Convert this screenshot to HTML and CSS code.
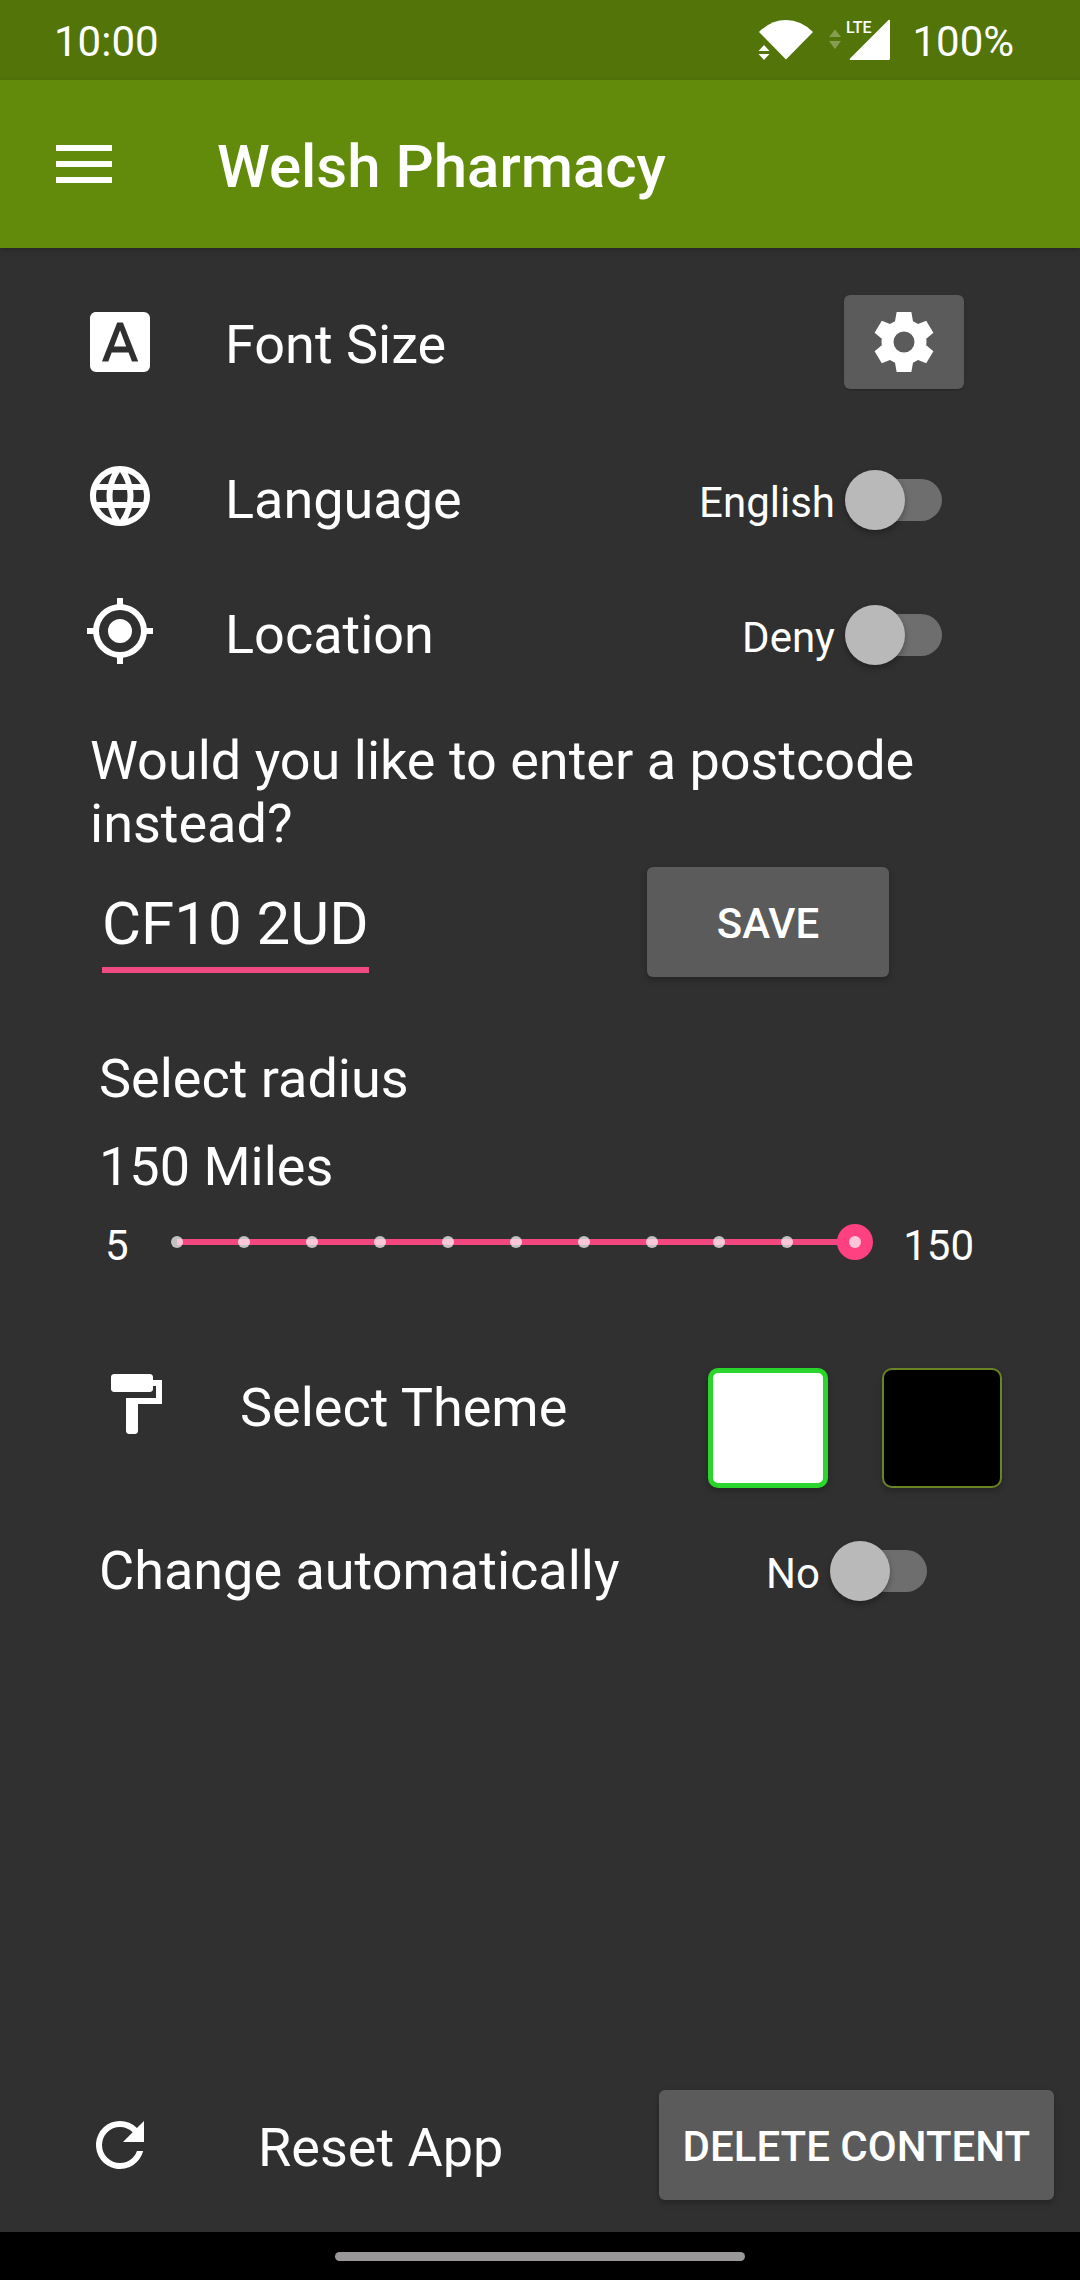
FILE: index.html
```html
<!DOCTYPE html>
<html lang="en">
<head>
<meta charset="utf-8">
<meta name="viewport" content="width=device-width, initial-scale=1">
<title>Welsh Pharmacy</title>
<link rel="stylesheet" href="styles.css">
</head>
<body>
<div class="status-bar">
  <span class="status-text">10:00</span>
  <div class="status-icons">
    <svg width="56" height="42" viewBox="0 0 56 42" fill="#fff" aria-hidden="true">
      <path d="M28 40.500L1 13Q13 1 28 1T55 13z"/>
      <path d="M6 26l5.500 6H.5zM.5 35h11L6 41z"/>
    </svg>
    <svg width="62" height="54" viewBox="0 -6 62 54" fill="#fff" aria-hidden="true">
      <path opacity=".3" d="M7 10.500l6 7.500H1zM1 22h12l-6 8z"/>
      <path d="M60.500 1q1.500-1 1.500 1v37.500q0 1.500-1.500 1.500H23q-2 0-1-1.500z"/>
      <text class="lte" x="18" y="14">LTE</text>
    </svg>
    <span class="status-text">100%</span>
  </div>
</div>

<header class="app-bar">
  <button class="menu-button" type="button" aria-label="Open menu">
    <svg width="56" height="38" viewBox="0 0 56 38" fill="#fff" aria-hidden="true"><path d="M0 0h56v6H0zM0 16h56v6H0zM0 32h56v6H0z"/></svg>
  </button>
  <h1 class="app-title">Welsh Pharmacy</h1>
</header>

<main class="settings">
  <div class="row row-font">
    <svg class="icon" viewBox="0 0 24 24" aria-hidden="true"><path fill-rule="evenodd" d="M4 2h16a2 2 0 0 1 2 2v16a2 2 0 0 1-2 2H4a2 2 0 0 1-2-2V4c0-1.100.9-2 2-2zM11.070 5.500L6 18.500h2.100l1.120-3h5.640l1.120 3h2.090l-5.110-13zM10 13.500l2.030-5.410 2.030 5.410z"/></svg>
    <span class="row-label">Font Size</span>
    <button class="button gear-button" type="button" aria-label="Font size settings">
      <svg class="icon" viewBox="0 0 24 24" aria-hidden="true"><path fill-rule="evenodd" d="M9.550 2h4.900L15 5.100l1.700.9 2.700-1.100 2.400 4-2.400 2q.2 1.100 0 2.200l2.400 2-2.400 4-2.700-1.100-1.700.9-.55 3.100h-4.900L9 18.900 7.300 18l-2.700 1.100-2.400-4 2.400-2q-.2-1.100 0-2.200l-2.400-2 2.400-4L7.300 6 9 5.100zM12 8.500a3.500 3.500 0 1 0 0 7 3.500 3.500 0 0 0 0-7z"/></svg>
    </button>
  </div>

  <div class="row row-switch">
    <svg class="icon" viewBox="0 0 24 24" aria-hidden="true"><path d="M11.990 2C6.470 2 2 6.480 2 12s4.470 10 9.990 10C17.520 22 22 17.520 22 12S17.520 2 11.990 2zm6.930 6h-2.950a15.650 15.650 0 0 0-1.380-3.560A8.030 8.030 0 0 1 18.920 8zM12 4.040c.83 1.200 1.480 2.530 1.910 3.960h-3.820c.43-1.430 1.080-2.760 1.910-3.960zM4.260 14C4.100 13.360 4 12.690 4 12s.1-1.360.26-2h3.380c-.08.660-.14 1.320-.14 2s.06 1.340.14 2H4.260zm.82 2h2.950c.32 1.250.78 2.450 1.380 3.560A7.987 7.987 0 0 1 5.080 16zm2.950-8H5.080a7.987 7.987 0 0 1 4.330-3.560A15.650 15.650 0 0 0 8.030 8zM12 19.960c-.83-1.200-1.480-2.530-1.910-3.960h3.820c-.43 1.430-1.080 2.760-1.910 3.960zM14.340 14H9.660c-.09-.66-.16-1.320-.16-2s.07-1.350.16-2h4.680c.09.650.16 1.320.16 2s-.07 1.340-.16 2zm.25 5.560c.6-1.110 1.060-2.310 1.380-3.560h2.950a8.030 8.030 0 0 1-4.330 3.560zM16.360 14c.08-.66.14-1.320.14-2s-.06-1.340-.14-2h3.380c.16.640.26 1.310.26 2s-.1 1.360-.26 2h-3.380z"/></svg>
    <span class="row-label">Language</span>
    <label class="switch"><span class="switch-text">English</span><input type="checkbox" role="switch"></label>
  </div>

  <div class="row row-switch">
    <svg class="icon" viewBox="0 0 24 24" aria-hidden="true"><path d="M12 8a4 4 0 1 0 0 8 4 4 0 0 0 0-8zm8.940 3A8.994 8.994 0 0 0 13 3.060V1h-2v2.060A8.994 8.994 0 0 0 3.060 11H1v2h2.060A8.994 8.994 0 0 0 11 20.940V23h2v-2.060A8.994 8.994 0 0 0 20.940 13H23v-2h-2.060zM12 19a7 7 0 1 1 0-14 7 7 0 0 1 0 14z"/></svg>
    <span class="row-label">Location</span>
    <label class="switch"><span class="switch-text">Deny</span><input type="checkbox" role="switch"></label>
  </div>

  <label class="question" for="postcode">Would you like to enter a postcode instead?</label>
  <form class="postcode">
    <input class="postcode-input" id="postcode" type="text" value="CF10 2UD">
    <button class="button save-button" type="button">SAVE</button>
  </form>

  <section class="radius">
    <label class="radius-title" for="radius">Select radius</label>
    <output class="radius-value" for="radius">150 Miles</output>
    <div class="range">
      <span class="range-end">5</span>
      <div class="slider">
        <input id="radius" type="range" min="5" max="150" step="14.5" value="150">
        <div class="ticks" aria-hidden="true"><i></i><i></i><i></i><i></i><i></i><i></i><i></i><i></i><i></i><i></i><i></i></div>
      </div>
      <span class="range-end">150</span>
    </div>
  </section>

  <div class="row row-theme">
    <svg class="icon" viewBox="0 0 24 24" aria-hidden="true"><path d="M18 4V3c0-.55-.45-1-1-1H5c-.55 0-1 .45-1 1v4c0 .55.450 1 1 1h12c.55 0 1-.45 1-1V6h1v4H9v11c0 .55.450 1 1 1h2c.55 0 1-.45 1-1v-9h8V4h-3z"/></svg>
    <span class="row-label">Select Theme</span>
    <div class="swatches">
      <input class="swatch swatch-light" type="radio" name="theme" aria-label="Light theme" checked>
      <input class="swatch swatch-dark" type="radio" name="theme" aria-label="Dark theme">
    </div>
  </div>

  <label class="row row-auto">
    <span class="auto-label">Change automatically</span>
    <span class="switch"><span class="switch-text">No</span><input type="checkbox" role="switch"></span>
  </label>

  <div class="row row-reset">
    <svg class="icon" viewBox="0 0 24 24" aria-hidden="true"><path d="M17.650 6.350A7.958 7.958 0 0 0 12 4a8 8 0 1 0 7.730 10h-2.080A5.990 5.990 0 0 1 12 18a6 6 0 1 1 0-12c1.660 0 3.140.69 4.220 1.780L13 11h7V4l-2.350 2.350z"/></svg>
    <span class="row-label">Reset App</span>
    <button class="button delete-button" type="button">DELETE CONTENT</button>
  </div>
</main>

<div class="nav-bar"><div class="nav-handle"></div></div>
</body>
</html>
```
FILE: styles.css
```css
* {
  box-sizing: border-box;
}

body {
  display: flex;
  flex-direction: column;
  min-height: 100vh;
  margin: 0;
  background: #303030;
  color: #fff;
  font-family: Roboto, "Liberation Sans", sans-serif;
  font-size: 54px;
  line-height: 63px;
}

button,
input {
  margin: 0;
  color: inherit;
  font-family: inherit;
}

/* System status bar */
.status-bar {
  display: flex;
  align-items: center;
  justify-content: space-between;
  height: 80px;
  padding: 0 66px 0 54px;
  background: #527409;
}

.status-icons {
  display: flex;
  align-items: center;
  gap: 14px;
}

.status-text {
  padding-top: 4px;
  font-size: 42px;
  line-height: 50px;
}

.status-icons .status-text {
  padding-left: 8px;
}

.lte {
  font-size: 16px;
  font-weight: 500;
}

/* App bar */
.app-bar {
  display: flex;
  align-items: center;
  gap: 105px;
  height: 168px;
  padding: 0 56px;
  background: #628b0b;
  box-shadow: 0 2px 6px rgba(0, 0, 0, .2);
}

.menu-button {
  display: flex;
  padding: 0;
  border: 0;
  background: none;
}

.app-title {
  margin: 0;
  padding-top: 6px;
  font-size: 60px;
  font-weight: 500;
  line-height: 70px;
}

/* Settings list */
.settings {
  display: flex;
  flex: 1;
  flex-direction: column;
  padding: 47px 0 32px;
}

.row {
  display: flex;
  align-items: center;
  gap: 69px;
  padding-left: 84px;
}

.icon {
  flex: none;
  width: 72px;
  height: 72px;
  fill: #fff;
}

.row-label {
  flex: 1;
  padding-top: 5px;
}

.row-font {
  margin-bottom: 8px;
  padding-right: 116px;
}

.row-switch {
  margin-top: 63px;
  height: 72px;
  padding-right: 138px;
}

.row-switch .row-label {
  padding-top: 7px;
}

.button {
  border: 0;
  border-radius: 6px;
  background: #5b5b5b;
  box-shadow: 0 3px 6px rgba(0, 0, 0, .25);
  font-size: 42px;
  font-weight: 500;
  line-height: 50px;
}

.gear-button {
  display: flex;
  align-items: center;
  justify-content: center;
  width: 120px;
  height: 94px;
  padding: 0;
  box-shadow: 0 1px 2px rgba(0, 0, 0, .25);
}

/* Switches */
.switch {
  display: flex;
  align-items: center;
  gap: 10px;
}

.row-switch .switch {
  padding-top: 8px;
}

.switch-text {
  padding-top: 6px;
  font-size: 42px;
  line-height: 50px;
}

.switch input {
  display: grid;
  grid-template-columns: 60px 1fr;
  align-items: center;
  width: 97px;
  height: 60px;
  appearance: none;
}

.switch input::before,
.switch input::after {
  grid-row: 1;
  content: "";
}

.switch input::before {
  grid-column: 1 / -1;
  height: 42px;
  margin-left: 10px;
  border-radius: 21px;
  background: #6f6e6f;
}

.switch input::after {
  grid-column: 1;
  height: 60px;
  border-radius: 50%;
  background: #b9b9b9;
  box-shadow: 0 3px 6px rgba(0, 0, 0, .3);
}

.switch input:checked::after {
  grid-column: 1 / -1;
  width: 60px;
  justify-self: end;
}

/* Postcode */
.question {
  margin-top: 62px;
  padding: 0 138px 0 90px;
}

.postcode {
  display: flex;
  align-items: flex-start;
  justify-content: space-between;
  margin-top: 12px;
  padding: 0 191px 0 102px;
}

.postcode-input {
  width: 267px;
  height: 106px;
  padding: 12px 0 0;
  border: 0;
  border-bottom: 6px solid #f04a82;
  outline: 0;
  background: none;
  font-size: 60px;
}

.save-button,
.delete-button {
  height: 110px;
  padding: 3px 24px 0;
}

.save-button {
  width: 242px;
}

/* Radius */
.radius {
  display: flex;
  flex-direction: column;
  margin-top: 70px;
}

.radius-title,
.radius-value {
  padding-left: 99px;
}

.radius-value {
  margin-top: 25px;
}

.range {
  display: flex;
  align-items: center;
  gap: 30px;
  height: 60px;
  margin-top: 14px;
  padding: 0 106px 0 105px;
}

.range-end {
  padding-top: 8px;
  font-size: 42px;
  line-height: 50px;
}

.slider {
  display: grid;
  flex: 1;
  align-items: center;
}

.slider > * {
  grid-area: 1 / 1;
}

.slider input {
  width: 100%;
  height: 36px;
  appearance: none;
  background: linear-gradient(#f2487f, #f2487f) center / calc(100% - 36px) 6px no-repeat;
}

.slider input::-webkit-slider-thumb {
  width: 36px;
  height: 36px;
  border-radius: 50%;
  appearance: none;
  background: #ff4081;
}

.ticks {
  z-index: 1;
  display: flex;
  justify-content: space-between;
  padding: 0 12px;
  pointer-events: none;
}

.ticks i {
  width: 12px;
  height: 12px;
  border-radius: 50%;
  background: rgba(255, 255, 255, .7);
}

/* Theme */
.row-theme {
  align-items: flex-start;
  margin-top: 96px;
  padding-right: 78px;
  padding-left: 99px;
}

.swatches {
  display: flex;
  gap: 54px;
}

.swatch {
  width: 120px;
  height: 120px;
  border: 2px solid #6b8424;
  border-radius: 10px;
  appearance: none;
  box-shadow: 0 3px 6px rgba(0, 0, 0, .25);
}

.swatch:checked {
  border: 5px solid #2bd52b;
}

.swatch-light {
  background: #fff;
}

.swatch-dark {
  background: #000;
}

.row-theme .row-label {
  padding-top: 8px;
}

.row-auto {
  margin-top: 51px;
  padding-right: 153px;
  padding-left: 99px;
}

.auto-label {
  flex: 1;
}

/* Reset */
.row-reset {
  gap: 102px;
  margin-top: auto;
  padding-right: 26px;
}

/* Gesture navigation */
.nav-bar {
  display: flex;
  align-items: center;
  justify-content: center;
  height: 48px;
  background: #000;
}

.nav-handle {
  width: 38%;
  height: 9px;
  border-radius: 5px;
  background: #999798;
}
```
